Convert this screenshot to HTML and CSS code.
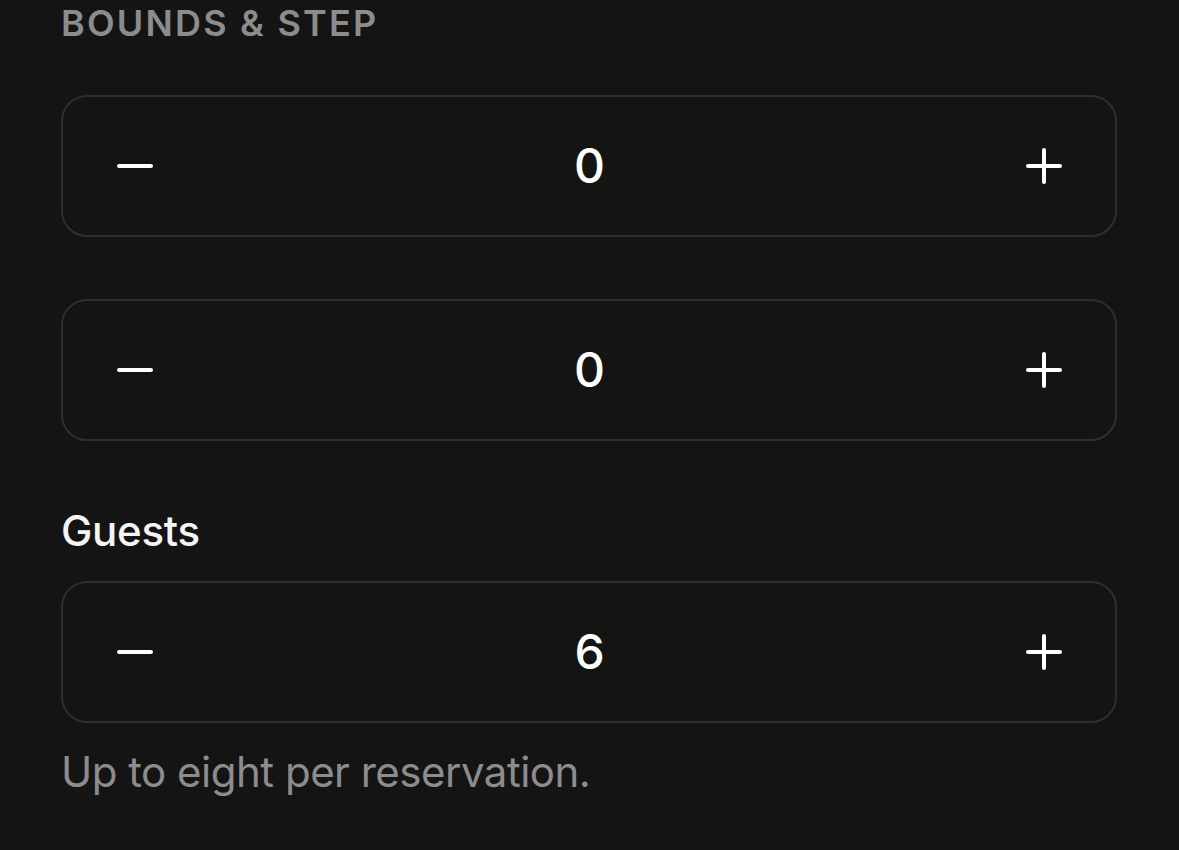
FILE: index.html
```html
<!DOCTYPE html>
<html lang="en">
<head>
    <meta charset="UTF-8">
    <meta name="viewport" content="width=device-width, initial-scale=1.0">
    <title>Stepper</title>
    <link rel="stylesheet" href="styles.css">
</head>
<body>
    <div class="page">
        <h3 class="section_title">Bounds &amp; Step</h3>

        <div class="stepper first">
            <button class="step_btn" aria-label="Decrease">
                <svg width="36" height="36" viewBox="0 0 36 36"><line x1="2" y1="18" x2="34" y2="18"/></svg>
            </button>
            <div class="value">0</div>
            <button class="step_btn" aria-label="Increase">
                <svg width="36" height="36" viewBox="0 0 36 36"><line x1="2" y1="18" x2="34" y2="18"/><line x1="18" y1="2" x2="18" y2="34"/></svg>
            </button>
        </div>

        <div class="stepper second">
            <button class="step_btn" aria-label="Decrease">
                <svg width="36" height="36" viewBox="0 0 36 36"><line x1="2" y1="18" x2="34" y2="18"/></svg>
            </button>
            <div class="value">0</div>
            <button class="step_btn" aria-label="Increase">
                <svg width="36" height="36" viewBox="0 0 36 36"><line x1="2" y1="18" x2="34" y2="18"/><line x1="18" y1="2" x2="18" y2="34"/></svg>
            </button>
        </div>

        <label class="field_label">Guests</label>
        <div class="stepper">
            <button class="step_btn" aria-label="Decrease">
                <svg width="36" height="36" viewBox="0 0 36 36"><line x1="2" y1="18" x2="34" y2="18"/></svg>
            </button>
            <div class="value">6</div>
            <button class="step_btn" aria-label="Increase">
                <svg width="36" height="36" viewBox="0 0 36 36"><line x1="2" y1="18" x2="34" y2="18"/><line x1="18" y1="2" x2="18" y2="34"/></svg>
            </button>
        </div>
        <p class="hint">Up to eight per reservation.</p>
    </div>
</body>
</html>
```

FILE: styles.css
```css
body {
    margin: 0;
    background-color: #141414;
    font-family: Inter, "Noto Sans", sans-serif;
    color: #f4f4f4;
}

.page {
    padding: 1px 62px 0 61px;
}

.section_title {
    margin: 0;
    font-size: 36px;
    line-height: 44px;
    font-weight: 600;
    letter-spacing: 2.2px;
    text-transform: uppercase;
    color: #8c8c8c;
}

.stepper {
    display: flex;
    align-items: center;
    justify-content: space-between;
    height: 142px;
    box-sizing: border-box;
    border: 2px solid #2e2e2e;
    border-radius: 26px;
    padding: 0 53px 0 54px;
}

.stepper.first {
    margin-top: 50px;
}

.stepper.second {
    margin-top: 62px;
}

.step_btn {
    display: flex;
    padding: 0;
    background: none;
    border: none;
    cursor: pointer;
}

.step_btn svg line {
    stroke: #fff;
    stroke-width: 4;
    stroke-linecap: round;
}

.value {
    font-size: 48px;
    line-height: 58px;
    font-weight: 500;
    color: #fff;
}

.field_label {
    display: block;
    margin: 65px 0 25px;
    font-size: 42px;
    line-height: 50px;
    font-weight: 500;
    letter-spacing: -0.3px;
}

.hint {
    margin: 24px 0 0;
    font-size: 42px;
    line-height: 50px;
    letter-spacing: -0.5px;
    color: #8c8c8c;
}
```
